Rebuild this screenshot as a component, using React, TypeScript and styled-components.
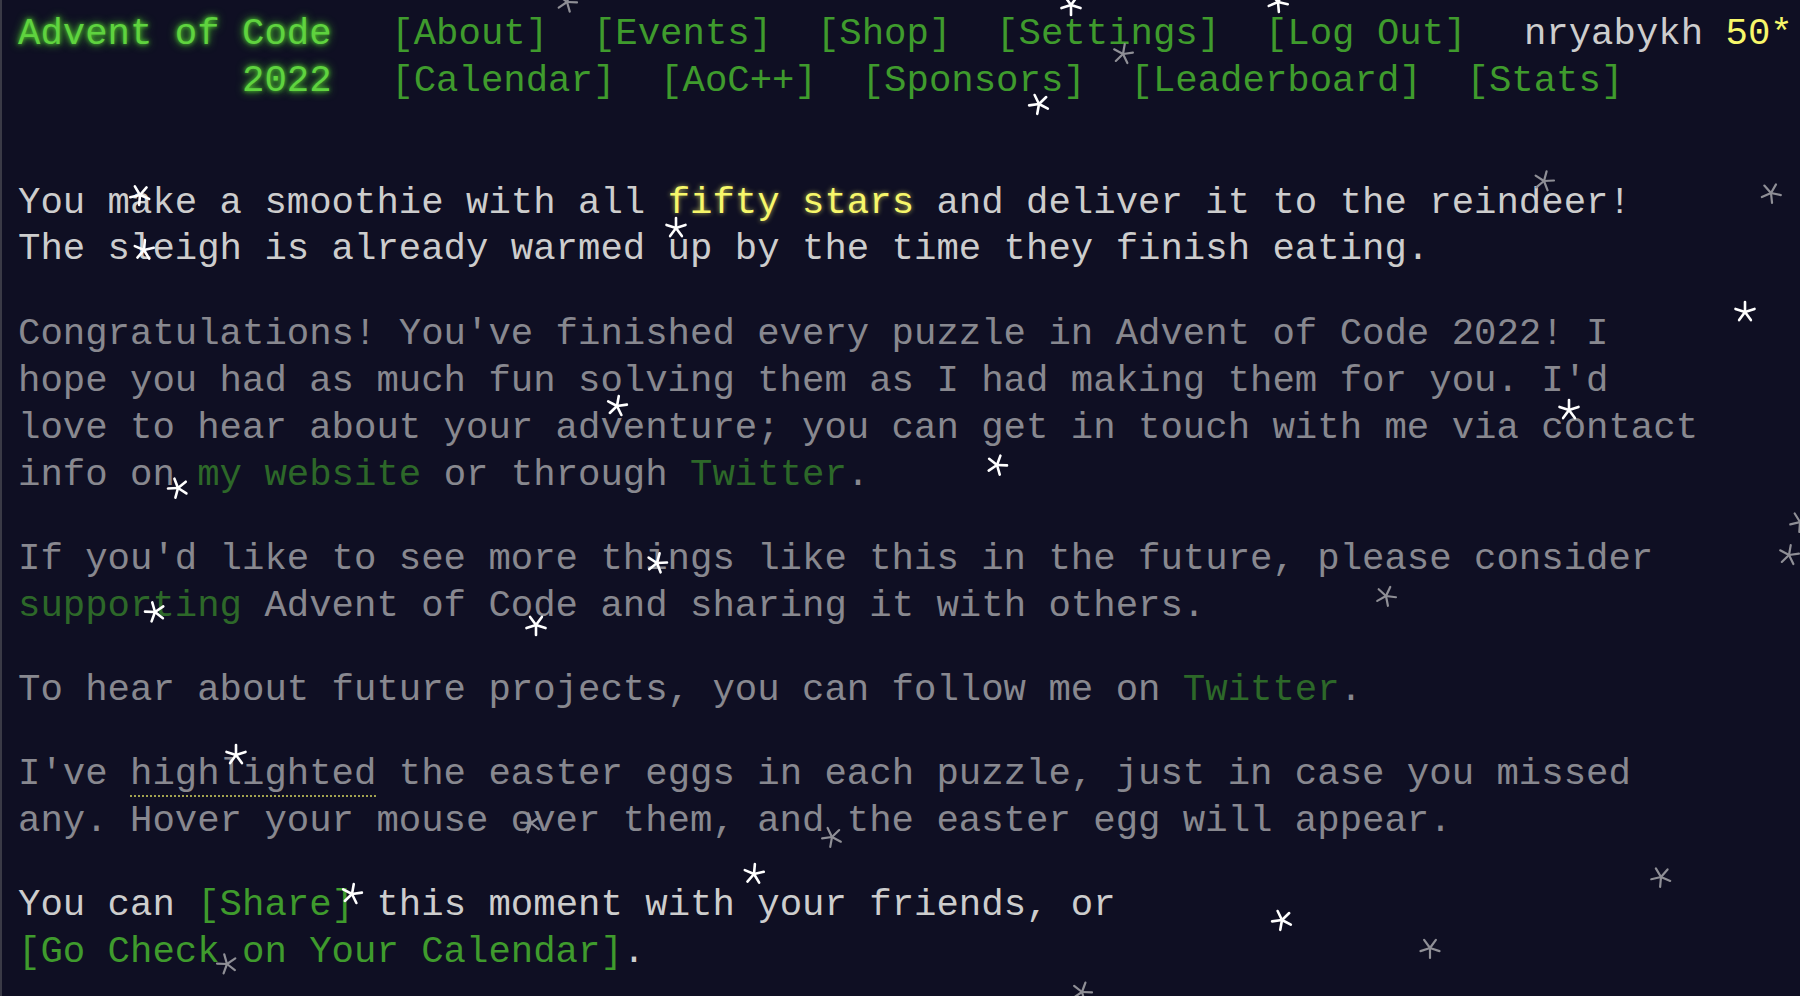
import React from "react";
import styled, { createGlobalStyle } from "styled-components";

const GlobalStyle = createGlobalStyle`
  html, body {
    margin: 0;
    padding: 0;
    background: #0f0f23;
  }
  body {
    color: #cdcdcd;
    font-family: "Liberation Mono", "DejaVu Sans Mono", monospace;
    font-size: 37.33px;
    line-height: 46.93px;
  }
`;

const Page = styled.div`
  position: relative;
  height: 996px;
  overflow: hidden;
  box-sizing: border-box;
  border-left: 2px solid #3a3a46;
  padding: 11px 0 0 16px;
`;

const Header = styled.header`
  white-space: nowrap;
  margin-bottom: 2em;
`;

const HeaderRow = styled.div`
  display: flex;
  align-items: baseline;
`;

const Title = styled.h1<{ $right?: boolean }>`
  margin: 0;
  font-size: 1em;
  font-weight: normal;
  width: 14ch;
  padding-right: 1em;
  text-align: ${({ $right }) => ($right ? "right" : "left")};

  & > a {
    color: #5fd33f;
    text-decoration: none;
    text-shadow: 0 0 4px #4cc62e, 0 0 10px #4cc62e;
  }
`;

const NavList = styled.ul`
  display: flex;
  list-style-type: none;
  margin: 0;
  padding: 0;

  & > li {
    padding: 0 0.6em;
  }
`;

const Link = styled.a<{ $nowrap?: boolean }>`
  color: #3f9b2d;
  text-decoration: none;
  white-space: ${({ $nowrap }) => ($nowrap ? "nowrap" : "normal")};
`;

const User = styled.div`
  padding-left: 35px;
  color: #cdcdcd;
`;

const StarCount = styled.span`
  color: #f7f76a;
`;

const Article = styled.article`
  width: calc(75ch + 2px);
`;

const Para = styled.p<{ $quiet?: boolean }>`
  margin: 1em 0;
  opacity: ${({ $quiet }) => ($quiet ? 0.64 : 1)};

  &:first-child {
    margin-top: 0;
  }
`;

const Glow = styled.span`
  color: #f7f76a;
  text-shadow: 0 0 5px rgba(247, 247, 106, 0.7);
`;

const Egg = styled.span`
  border-bottom: 2px dotted #f7f76a;
`;

const StarMark = styled.svg`
  position: absolute;
  width: 26px;
  height: 26px;
  pointer-events: none;
`;

type StarSpec = { x: number; y: number; gray?: boolean; rot: number };

const stars: StarSpec[] = [
  { x: 565, y: 2, gray: true, rot: 20 },
  { x: 1069, y: 5, rot: 180 },
  { x: 1276, y: 2, rot: 175 },
  { x: 1121, y: 54, gray: true, rot: 10 },
  { x: 1037, y: 104, rot: 190 },
  { x: 138, y: 195, rot: 185 },
  { x: 142, y: 250, rot: 5 },
  { x: 674, y: 228, rot: 0 },
  { x: 1542, y: 181, gray: true, rot: 15 },
  { x: 1769, y: 193, gray: true, rot: 30 },
  { x: 1743, y: 312, rot: 0 },
  { x: 615, y: 406, rot: 10 },
  { x: 1567, y: 410, rot: 0 },
  { x: 995, y: 465, rot: 20 },
  { x: 176, y: 488, rot: 195 },
  { x: 1798, y: 522, gray: true, rot: 40 },
  { x: 1787, y: 555, gray: true, rot: 10 },
  { x: 655, y: 563, rot: 15 },
  { x: 1384, y: 596, gray: true, rot: 25 },
  { x: 153, y: 612, rot: 200 },
  { x: 534, y: 625, rot: 180 },
  { x: 234, y: 755, rot: 0 },
  { x: 529, y: 823, gray: true, rot: 200 },
  { x: 830, y: 837, gray: true, rot: 190 },
  { x: 752, y: 874, rot: 5 },
  { x: 350, y: 894, rot: 10 },
  { x: 1659, y: 877, gray: true, rot: 185 },
  { x: 1280, y: 920, rot: 190 },
  { x: 1428, y: 948, gray: true, rot: 180 },
  { x: 225, y: 964, gray: true, rot: 200 },
  { x: 1080, y: 992, gray: true, rot: 20 },
];

function Star({ x, y, gray, rot }: StarSpec) {
  const arms = [0, 1, 2, 3, 4].map((i) => {
    const a = ((rot + i * 72) * Math.PI) / 180;
    return { x2: 13 + 10 * Math.sin(a), y2: 13 - 10 * Math.cos(a) };
  });
  return (
    <StarMark viewBox="0 0 26 26" style={{ left: x - 13, top: y - 13 }}>
      {arms.map((arm, i) => (
        <line
          key={i}
          x1={13}
          y1={13}
          x2={arm.x2}
          y2={arm.y2}
          stroke={gray ? "#8f8f96" : "#ffffff"}
          strokeWidth={gray ? 2.2 : 2.6}
          strokeLinecap="round"
        />
      ))}
    </StarMark>
  );
}

const topNav = ["[About]", "[Events]", "[Shop]", "[Settings]", "[Log Out]"];
const eventNav = ["[Calendar]", "[AoC++]", "[Sponsors]", "[Leaderboard]", "[Stats]"];

export default function App() {
  return (
    <>
      <GlobalStyle />
      <Page>
        <Header>
          <HeaderRow>
            <Title>
              <a href="#">Advent of Code</a>
            </Title>
            <nav>
              <NavList>
                {topNav.map((item) => (
                  <li key={item}>
                    <Link href="#">{item}</Link>
                  </li>
                ))}
              </NavList>
            </nav>
            <User>
              nryabykh <StarCount>50*</StarCount>
            </User>
          </HeaderRow>
          <HeaderRow>
            <Title $right>
              <a href="#">2022</a>
            </Title>
            <nav>
              <NavList>
                {eventNav.map((item) => (
                  <li key={item}>
                    <Link href="#">{item}</Link>
                  </li>
                ))}
              </NavList>
            </nav>
          </HeaderRow>
        </Header>
        <main>
          <Article>
            <Para>
              You make a smoothie with all <Glow>fifty stars</Glow> and deliver it to the reindeer!
              The sleigh is already warmed up by the time they finish eating.
            </Para>
            <Para $quiet>
              Congratulations! You've finished every puzzle in Advent of Code 2022! I hope you had as
              much fun solving them as I had making them for you. I'd love to hear about your
              adventure; you can get in touch with me via contact info on{" "}
              <Link href="#">my website</Link> or through <Link href="#">Twitter</Link>.
            </Para>
            <Para $quiet>
              If you'd like to see more things like this in the future, please consider{" "}
              <Link href="#">supporting</Link> Advent of Code and sharing it with others.
            </Para>
            <Para $quiet>
              To hear about future projects, you can follow me on <Link href="#">Twitter</Link>.
            </Para>
            <Para $quiet>
              I've <Egg>highlighted</Egg> the easter eggs in each puzzle, just in case you missed
              any. Hover your mouse over them, and the easter egg will appear.
            </Para>
            <Para>
              You can <Link href="#">[Share]</Link> this moment with your friends, or{" "}
              <Link href="#" $nowrap>
                [Go Check on Your Calendar]
              </Link>
              .
            </Para>
          </Article>
        </main>
        {stars.map((s, i) => (
          <Star key={i} {...s} />
        ))}
      </Page>
    </>
  );
}
